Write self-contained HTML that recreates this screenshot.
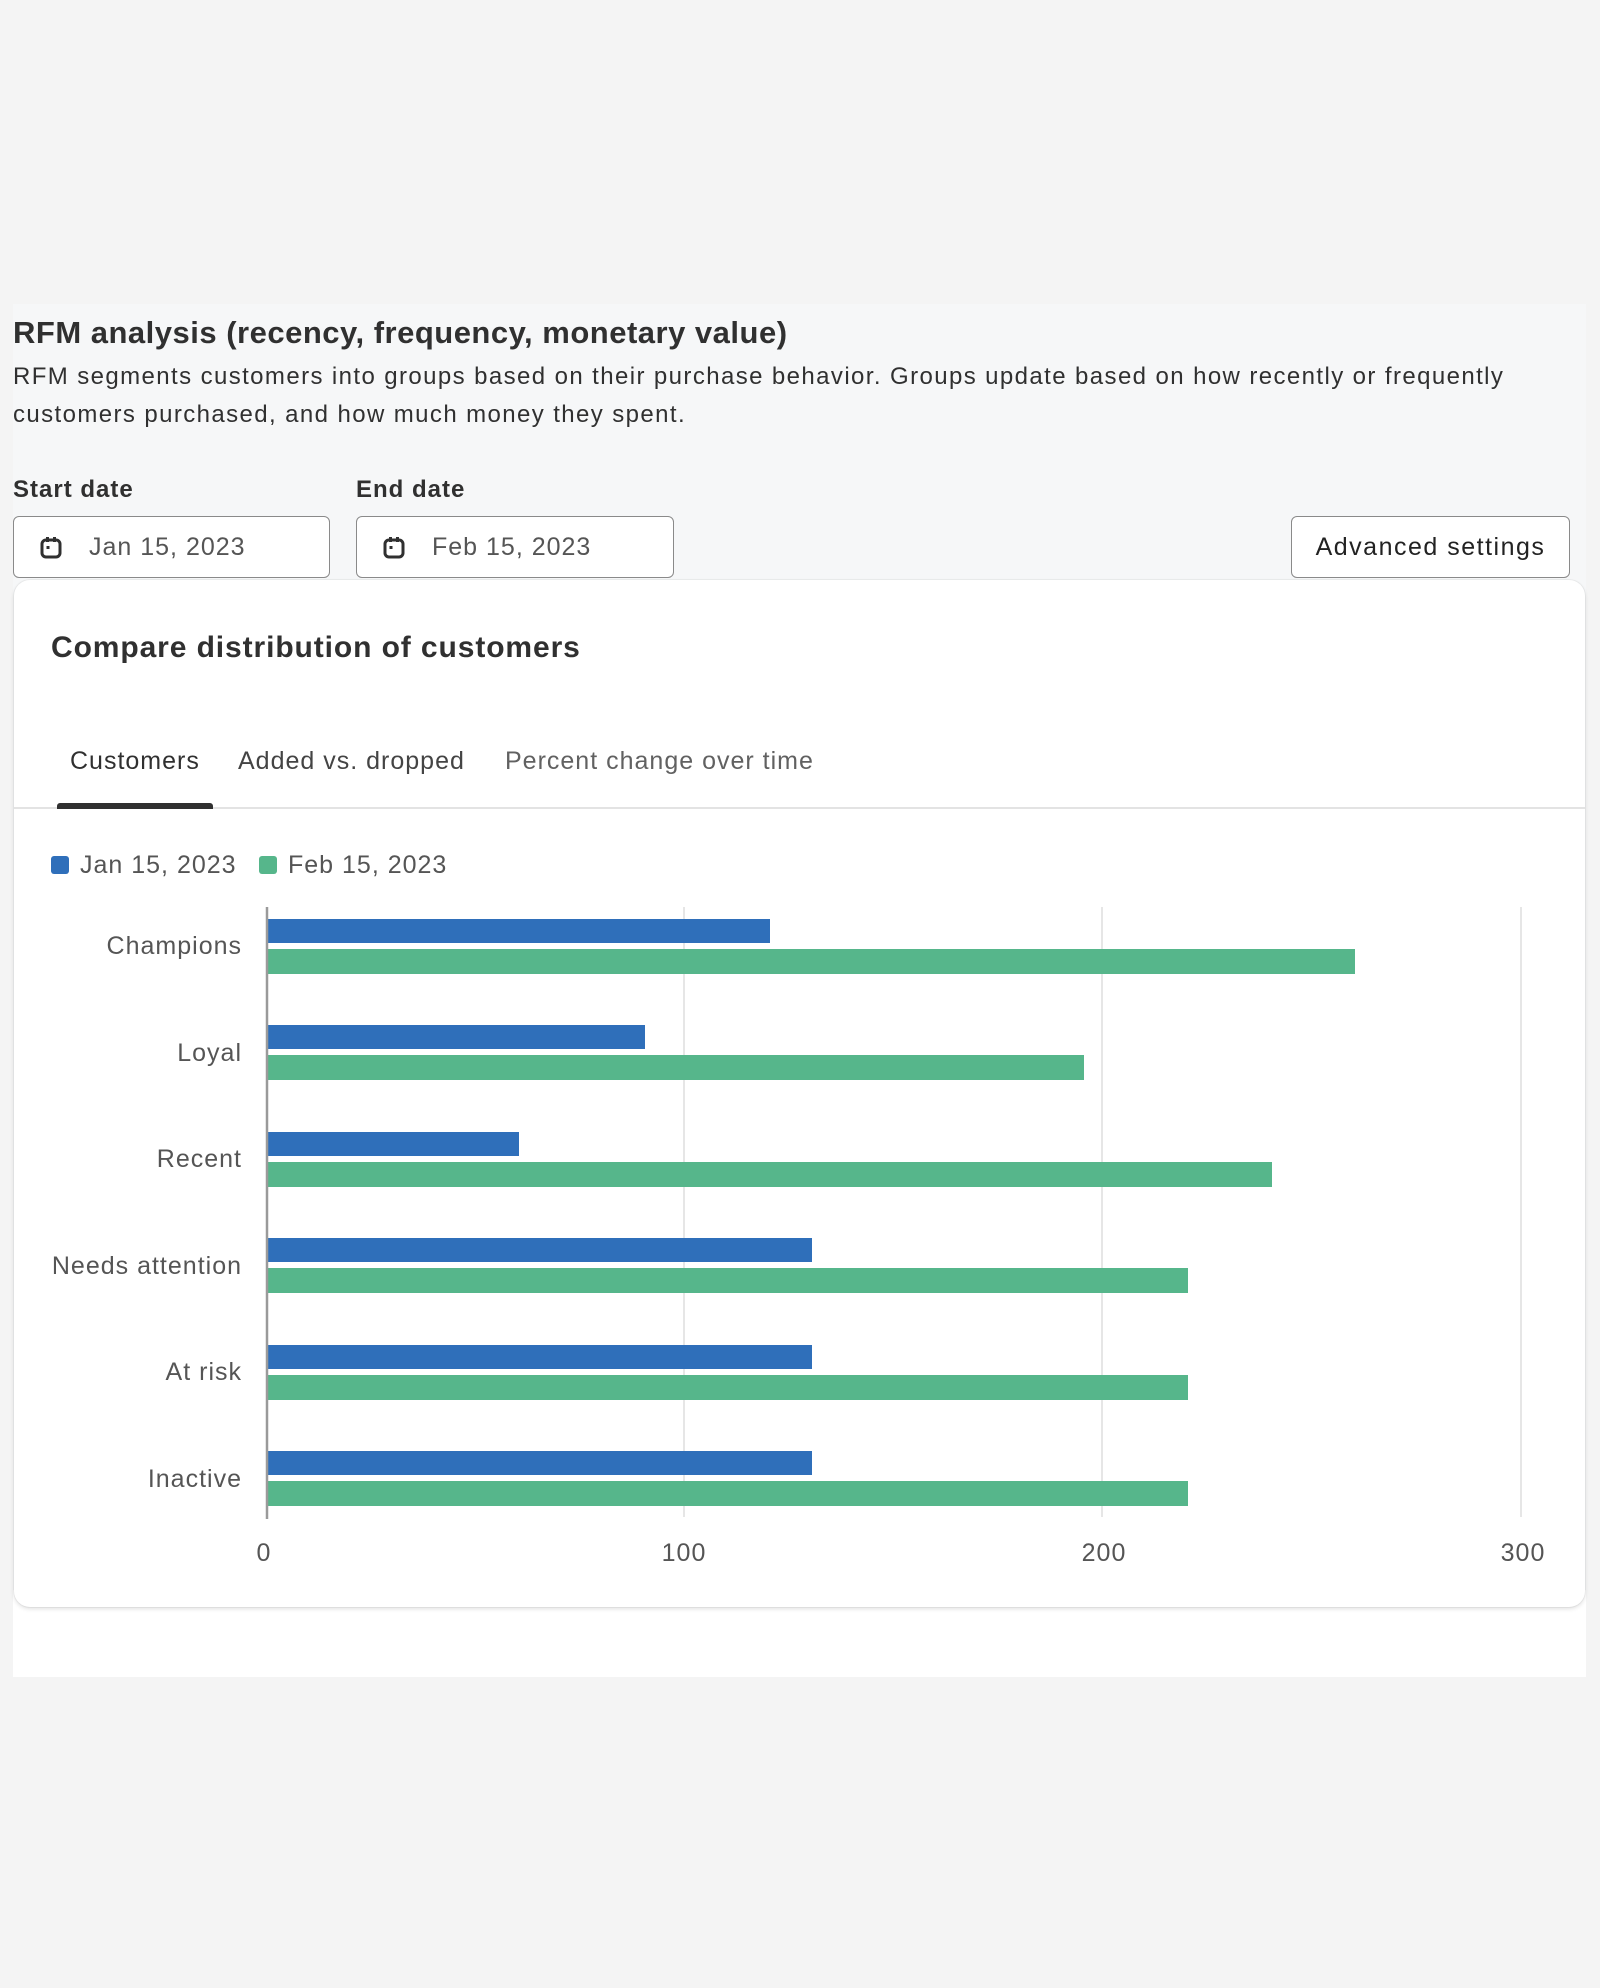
<!DOCTYPE html>
<html><head><meta charset="utf-8"><style>
*{margin:0;padding:0;box-sizing:border-box}
body{width:1600px;height:1988px;background:#f4f4f4;font-family:"Liberation Sans",Arial,sans-serif;color:#303030;position:relative;overflow:hidden;letter-spacing:1px}
.a{position:absolute;white-space:nowrap}
.panel{position:absolute;left:13px;top:304px;width:1573px;height:1373px;background:#f6f7f8}
.white{position:absolute;left:13px;top:1590px;width:1573px;height:87px;background:#fff}
.inp{position:absolute;top:516px;height:62px;background:#fff;border:1.5px solid #8a8a8a;border-radius:6px}
.card{position:absolute;left:14px;top:580px;width:1571px;height:1027px;background:#fff;border-radius:16px;box-shadow:0 2px 4px rgba(0,0,0,.12),0 0 0 1px rgba(0,0,0,.04)}
svg text{letter-spacing:1px}
</style></head><body>
<div class="panel"></div>
<div class="white"></div>
<div class="a" style="left:13px;top:315px;font-size:31px;font-weight:bold;color:#303030;letter-spacing:0.5px">RFM analysis (recency, frequency, monetary value)</div>
<div class="a" style="left:13px;top:358px;font-size:24px;line-height:38px;color:#303030;letter-spacing:1.4px">RFM segments customers into groups based on their purchase behavior. Groups update based on how recently or frequently<br>customers purchased, and how much money they spent.</div>
<div class="a" style="left:13px;top:476px;font-size:24px;font-weight:bold;color:#303030">Start date</div>
<div class="a" style="left:356px;top:476px;font-size:24px;font-weight:bold;color:#303030">End date</div>
<div class="inp" style="left:13px;width:317px"></div>
<div class="inp" style="left:356px;width:318px"></div>
<svg class="a" style="left:39px;top:536px" width="24" height="24" viewBox="0 0 24 24"><rect x="3" y="4" width="18" height="17" rx="4" fill="none" stroke="#303030" stroke-width="3"/><rect x="7" y="1" width="3" height="5" fill="#303030"/><rect x="14" y="1" width="3" height="5" fill="#303030"/><rect x="7.5" y="10" width="3" height="3" fill="#303030"/></svg>
<svg class="a" style="left:382px;top:536px" width="24" height="24" viewBox="0 0 24 24"><rect x="3" y="4" width="18" height="17" rx="4" fill="none" stroke="#303030" stroke-width="3"/><rect x="7" y="1" width="3" height="5" fill="#303030"/><rect x="14" y="1" width="3" height="5" fill="#303030"/><rect x="7.5" y="10" width="3" height="3" fill="#303030"/></svg>
<div class="a" style="left:89px;top:533px;font-size:25px;color:#555">Jan 15, 2023</div>
<div class="a" style="left:432px;top:533px;font-size:25px;color:#555">Feb 15, 2023</div>
<div class="inp" style="left:1291px;width:279px;display:flex;align-items:center;justify-content:center;font-size:25px;color:#222;letter-spacing:1.5px">Advanced settings</div>
<div class="card"></div>
<div class="a" style="left:51px;top:631px;font-size:30px;font-weight:bold;color:#303030;letter-spacing:0.9px">Compare distribution of customers</div>
<div class="a" style="left:70px;top:747px;font-size:25px;color:#303030">Customers</div>
<div class="a" style="left:238px;top:747px;font-size:25px;color:#444">Added vs. dropped</div>
<div class="a" style="left:505px;top:747px;font-size:25px;color:#616161">Percent change over time</div>
<div class="a" style="left:14px;top:807px;width:1571px;height:2px;background:#e3e3e3"></div>
<div class="a" style="left:57px;top:803px;width:156px;height:6px;background:#303030;border-radius:3px 3px 0 0"></div>
<div class="a" style="left:51px;top:856px;width:18px;height:18px;background:#2f6fba;border-radius:3px"></div>
<div class="a" style="left:80px;top:851px;font-size:25px;color:#555">Jan 15, 2023</div>
<div class="a" style="left:259px;top:856px;width:18px;height:18px;background:#56b68b;border-radius:3px"></div>
<div class="a" style="left:288px;top:851px;font-size:25px;color:#555">Feb 15, 2023</div>
<svg class="a" style="left:0;top:0" width="1600" height="1988">
<g stroke="#e6e6e6" stroke-width="2"><line x1="684" y1="907" x2="684" y2="1517"/><line x1="1102" y1="907" x2="1102" y2="1517"/><line x1="1521" y1="907" x2="1521" y2="1517"/></g>
<g font-family="Liberation Sans,Arial,sans-serif" font-size="25" fill="#555" text-anchor="end">
<text x="242" y="954">Champions</text><text x="242" y="1061">Loyal</text><text x="242" y="1167">Recent</text><text x="242" y="1274">Needs attention</text><text x="242" y="1380">At risk</text><text x="242" y="1487">Inactive</text>
</g>
<g font-family="Liberation Sans,Arial,sans-serif" font-size="25" fill="#555" text-anchor="middle">
<text x="264" y="1561">0</text><text x="684" y="1561">100</text><text x="1104" y="1561">200</text><text x="1523" y="1561">300</text>
</g>
<g fill="#2f6fba">
<rect x="268" y="919" width="502" height="24"/><rect x="268" y="1025" width="377" height="24"/><rect x="268" y="1132" width="251" height="24"/><rect x="268" y="1238" width="544" height="24"/><rect x="268" y="1345" width="544" height="24"/><rect x="268" y="1451" width="544" height="24"/>
</g>
<g fill="#56b68b">
<rect x="268" y="949" width="1087" height="25"/><rect x="268" y="1055" width="816" height="25"/><rect x="268" y="1162" width="1004" height="25"/><rect x="268" y="1268" width="920" height="25"/><rect x="268" y="1375" width="920" height="25"/><rect x="268" y="1481" width="920" height="25"/>
</g>
<line x1="267" y1="907" x2="267" y2="1519" stroke="#9a9a9a" stroke-width="2.5"/>
</svg>
</body></html>
